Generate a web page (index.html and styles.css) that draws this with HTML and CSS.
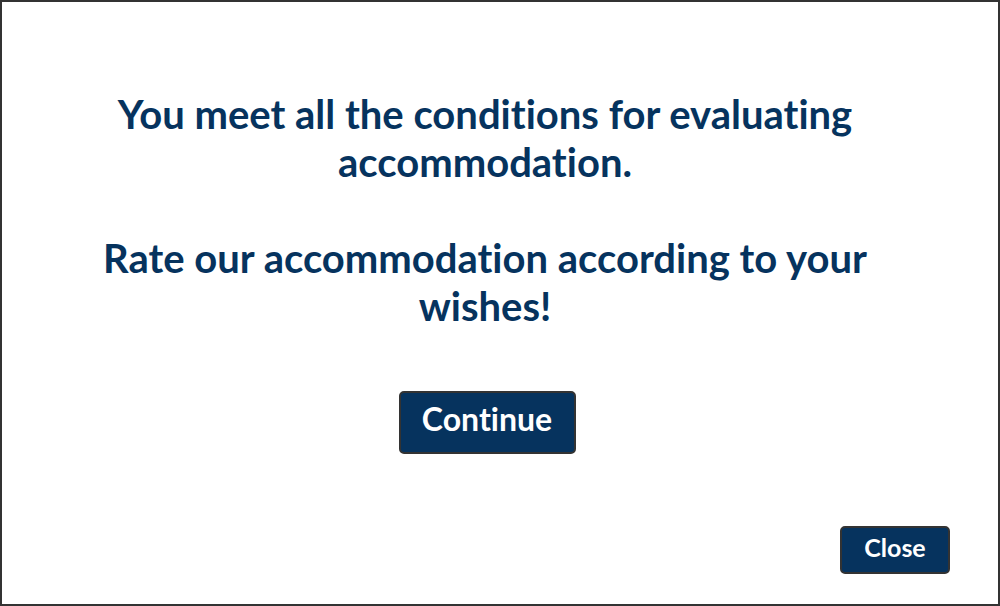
FILE: index.html
```html
<!DOCTYPE html>
<html>
<head>
<meta charset="utf-8">
<link rel="stylesheet" href="styles.css">
</head>
<body>
<div class="frame">
  <div class="content">
    <h1 class="message">You meet all the conditions for evaluating accommodation.<br><br>Rate our accommodation according to your wishes!</h1>
    <button class="btn btn-continue">Continue</button>
  </div>
  <div class="footer">
    <button class="btn btn-close">Close</button>
  </div>
</div>
</body>
</html>
```

FILE: styles.css
```css
html, body {
  margin: 0;
  padding: 0;
  background: #ffffff;
}
body {
  font-family: Lato, "Noto Sans", sans-serif;
  font-variant-ligatures: none;
  width: 1000px;
  height: 606px;
  box-sizing: border-box;
}
.frame {
  box-sizing: border-box;
  width: 1000px;
  height: 606px;
  border: 2px solid #333333;
  display: flex;
  flex-direction: column;
}
.content {
  flex: 1;
  display: flex;
  flex-direction: column;
  align-items: center;
  padding: 88px 111px 0 81px;
}
.message {
  margin: 0;
  font-size: 40px;
  line-height: 48px;
  font-weight: 700;
  color: #06335e;
  text-align: center;
}
.btn {
  font-family: Lato, "Noto Sans", sans-serif;
  font-variant-ligatures: none;
  font-weight: 700;
  color: #ffffff;
  background: #06335e;
  border: 2px solid #333333;
  border-radius: 5px;
  cursor: pointer;
}
.btn-continue {
  margin: 61px 0 0 4px;
  width: 177px;
  height: 63px;
  font-size: 32px;
  padding: 0 0 8px 0;
}
.footer {
  display: flex;
  justify-content: flex-end;
  padding: 0 48px 30px 0;
}
.btn-close {
  width: 110px;
  height: 48px;
  font-size: 25px;
  padding: 0 0 6px 0;
}
```
